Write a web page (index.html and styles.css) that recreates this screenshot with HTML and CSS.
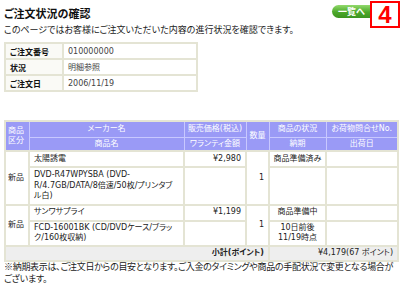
FILE: index.html
```html
<!DOCTYPE html>
<html lang="ja">
<head>
<meta charset="utf-8">
<link rel="stylesheet" href="styles.css">
</head>
<body>
<div class="page">
  <div class="head">
    <div class="titles">
      <h1 class="title">ご注文状況の確認</h1>
      <p class="lead">このページではお客様にご注文いただいた内容の進行状況を確認できます。</p>
    </div>
    <a class="back">一覧へ</a>
  </div>

  <table class="info">
    <tr><th>ご注文番号</th><td>010000000</td></tr>
    <tr><th>状況</th><td>明細参照</td></tr>
    <tr><th>ご注文日</th><td>2006/11/19</td></tr>
  </table>

  <table class="items">
    <colgroup>
      <col class="c1"><col class="c2"><col class="c3"><col class="c4"><col class="c5"><col class="c6">
    </colgroup>
    <tr class="h1">
      <th rowspan="2" class="kubun">商品<br>区分</th>
      <th>メーカー名</th>
      <th>販売価格(税込)</th>
      <th rowspan="2">数量</th>
      <th>商品の状況</th>
      <th>お荷物問合せNo.</th>
    </tr>
    <tr class="h2">
      <th>商品名</th>
      <th>ワランティ金額</th>
      <th>納期</th>
      <th>出荷日</th>
    </tr>
    <tr class="r-top">
      <td rowspan="2" class="cat">新品</td>
      <td>太陽誘電</td>
      <td class="num">¥2,980</td>
      <td rowspan="2" class="qty">1</td>
      <td class="ctr">商品準備済み</td>
      <td></td>
    </tr>
    <tr class="r-bot">
      <td class="name3">DVD-R47WPYSBA (DVD-R/4.7GB/DATA/8倍速/50枚/プリンタブル白)</td>
      <td></td>
      <td></td>
      <td></td>
    </tr>
    <tr class="r-top">
      <td rowspan="2" class="cat">新品</td>
      <td>サンワサプライ</td>
      <td class="num">¥1,199</td>
      <td rowspan="2" class="qty">1</td>
      <td class="ctr">商品準備中</td>
      <td></td>
    </tr>
    <tr class="r-bot">
      <td>FCD-16001BK (CD/DVDケース/ブラック/160枚収納)</td>
      <td></td>
      <td class="ctr">10日前後<br>11/19時点</td>
      <td></td>
    </tr>
    <tr class="total">
      <td colspan="4" class="tlabel">小計(ポイント)</td>
      <td colspan="2" class="tval">¥4,179(67 ポイント)</td>
    </tr>
  </table>

  <p class="note">※納期表示は、ご注文日からの目安となります。ご入金のタイミングや商品の手配状況で変更となる場合がございます。</p>

  <div class="badge">4</div>
</div>
</body>
</html>
```

FILE: styles.css
```css
* { box-sizing: border-box; }
html, body { margin: 0; padding: 0; background: #fff; }
body {
  font-family: "Noto Sans CJK JP", "Liberation Sans", sans-serif;
  font-size: 9px;
  color: #222;
  font-feature-settings: "palt";
}
.page { position: relative; padding: 5px 4px 0 4px; width: 400px; height: 287px; overflow: hidden; }
.head { display: flex; justify-content: space-between; align-items: flex-start; }
.title { margin: 0; font-size: 11px; line-height: 17px; font-weight: bold; color: #111; }
.lead { margin: 2px 0 0 0; font-size: 9px; line-height: 12px; }
.back {
  margin: 0 18px 0 0;
  display: block;
  width: 46px; height: 13px;
  border-radius: 7px;
  background: linear-gradient(#92da6c, #4ca82a 55%, #3c9420);
  color: #fff; font-weight: bold; font-size: 9px; line-height: 13px;
  padding-left: 6px;
}
.info {
  margin-top: 6px;
  width: 194px;
  border-collapse: collapse;
  border: 2px solid #e4e4d4;
}
.info th, .info td {
  border: 2px solid #e4e4d4;
  height: 16px;
  padding: 0 4px;
  text-align: left;
  font-size: 8px;
  line-height: 11px;
}
.info th { width: 58px; font-weight: bold; background: #fafaf6; color: #111; }
.info td { color: #444; font-family: "DejaVu Sans", "Noto Sans CJK JP", sans-serif; }

.items {
  margin-top: 28px;
  width: 393px;
  border-collapse: collapse;
  table-layout: fixed;
  border: 2px solid #e4e4d4;
  font-family: "DejaVu Sans", "Noto Sans CJK JP", sans-serif;
  font-size: 8px;
}
.c1 { width: 24px; } .c2 { width: 155px; } .c3 { width: 62px; }
.c4 { width: 23px; } .c5 { width: 57px; } .c6 { width: 72px; }
.items th {
  background: #9a9af6;
  color: #fff;
  font-weight: normal;
  font-size: 8px;
  border: 1px solid #c8c8ff;
  padding: 0;
  line-height: 10px;
  white-space: nowrap;
}
.h1 th { height: 16px; }
.h2 th { height: 14px; }
.items th.kubun { text-align: left; padding-left: 2px; }
.items td {
  border: 2px solid #e4e4d4;
  padding: 1px 4px;
  vertical-align: middle;
  line-height: 10.5px;
  color: #222;
}
.r-top td { height: 16px; }
.items td.name3 { padding: 2px 4px; }
.items td.cat { padding: 0 2px; }
.items td.num { text-align: right; }
.items td.qty { text-align: right; }
.items td.ctr { text-align: center; padding: 1px 2px; }
.total td { background: #eeeeee; height: 15px; font-weight: bold; }
.total td.tlabel { text-align: right; }
.total td.tval { text-align: right; font-weight: normal; }
.note { margin: -1px 0 0 0; line-height: 12px; font-size: 9px; letter-spacing: -0.3px; }
.badge {
  position: absolute;
  left: 370px; top: 1px;
  width: 30px; height: 27px;
  border: 2px solid #f00;
  background: #fff;
  color: #f00;
  font-family: "Liberation Sans", sans-serif;
  font-weight: bold;
  font-size: 24px;
  line-height: 23px;
  text-align: center;
}
```
